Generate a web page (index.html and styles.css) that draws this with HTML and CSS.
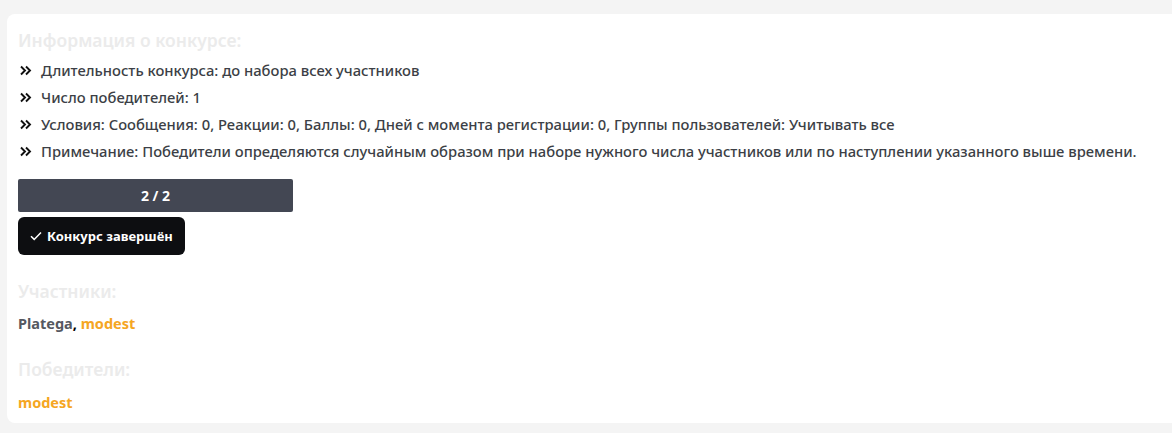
FILE: index.html
```html
<!DOCTYPE html>
<html lang="ru">
<head>
<meta charset="utf-8">
<link rel="stylesheet" href="styles.css">
</head>
<body>
<div class="card">
  <h3 class="title">Информация о конкурсе:</h3>
  <ul class="info">
    <li><span class="chev"><svg width="12" height="11" viewBox="0 0 12 11"><path d="M1 1.5 L5 5.5 L1 9.5 M6 1.5 L10 5.5 L6 9.5" fill="none" stroke="#111" stroke-width="1.9"/></svg></span>Длительность конкурса: до набора всех участников</li>
    <li><span class="chev"><svg width="12" height="11" viewBox="0 0 12 11"><path d="M1 1.5 L5 5.5 L1 9.5 M6 1.5 L10 5.5 L6 9.5" fill="none" stroke="#111" stroke-width="1.9"/></svg></span>Число победителей: 1</li>
    <li><span class="chev"><svg width="12" height="11" viewBox="0 0 12 11"><path d="M1 1.5 L5 5.5 L1 9.5 M6 1.5 L10 5.5 L6 9.5" fill="none" stroke="#111" stroke-width="1.9"/></svg></span>Условия: Сообщения: 0, Реакции: 0, Баллы: 0, Дней с момента регистрации: 0, Группы пользователей: Учитывать все</li>
    <li><span class="chev"><svg width="12" height="11" viewBox="0 0 12 11"><path d="M1 1.5 L5 5.5 L1 9.5 M6 1.5 L10 5.5 L6 9.5" fill="none" stroke="#111" stroke-width="1.9"/></svg></span>Примечание: Победители определяются случайным образом при наборе нужного числа участников или по наступлении указанного выше времени.</li>
  </ul>
  <div class="progress">2 / 2</div>
  <div class="done"><svg class="check" width="12" height="10" viewBox="0 0 12 10"><path d="M1 5.2 L4.2 8.4 L11 1.4" fill="none" stroke="#fff" stroke-width="1.5"/></svg>Конкурс завершён</div>
  <h3 class="title sec">Участники:</h3>
  <div class="users"><span class="u">Platega</span>, <span class="o">modest</span></div>
  <h3 class="title sec">Победители:</h3>
  <div class="users last"><span class="o">modest</span></div>
</div>
</body>
</html>
```
FILE: styles.css
```css
html, body {
  margin: 0;
  padding: 0;
  background: #f4f4f4;
}
body {
  font-family: "Noto Sans", "Open Sans", sans-serif;
  padding: 14px 0 0 7px;
}
.card {
  background: #fff;
  border-radius: 8px 0 0 8px;
  padding: 14px 11px 12px 11px;
  box-sizing: border-box;
  height: 409px;
}
.title {
  margin: 0;
  font-size: 17.5px;
  font-weight: 600;
  color: #ebebeb;
  line-height: 24px;
}
.info {
  list-style: none;
  margin: 9px 0 0 0;
  padding: 0;
}
.info li {
  display: flex;
  align-items: center;
  font-size: 14.75px;
  font-weight: 500;
  color: #3c3f46;
  line-height: 19px;
  margin-bottom: 8px;
}
.info li:last-child {
  margin-bottom: 0;
}
.chev {
  display: inline-flex;
  width: 23px;
  padding-left: 2px;
  box-sizing: border-box;
}
.progress {
  margin-top: 18px;
  width: 275px;
  height: 33px;
  background: #434753;
  border-radius: 2px;
  color: #fff;
  font-size: 14px;
  font-weight: 700;
  display: flex;
  align-items: center;
  justify-content: center;
}
.done {
  margin-top: 5px;
  width: 167px;
  height: 38px;
  box-sizing: border-box;
  background: #0d0e11;
  border-radius: 6px;
  color: #fff;
  font-size: 13px;
  font-weight: 700;
  display: flex;
  align-items: center;
  padding-left: 12px;
}
.check {
  margin-right: 5px;
}
.sec {
  margin-top: 24px;
}
.users {
  margin-top: 11px;
  font-size: 14.5px;
  font-weight: 700;
  line-height: 19px;
}
.users.last {
  margin-top: 12px;
}
.u { color: #555860; }
.o { color: #f5a623; }
```
